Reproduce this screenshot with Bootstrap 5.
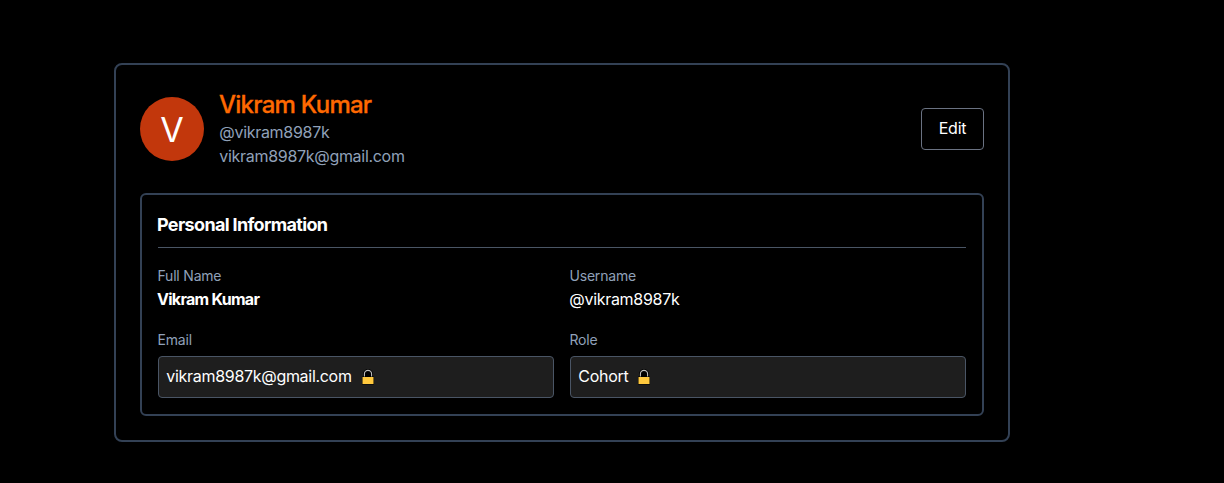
<!DOCTYPE html>
<html lang="en">
<head>
<meta charset="utf-8">
<meta name="viewport" content="width=device-width, initial-scale=1">
<title>Profile</title>
<link href="https://cdn.jsdelivr.net/npm/bootstrap@5.3.0/dist/css/bootstrap.min.css" rel="stylesheet">
<style>
body{background:#000;color:#fff;font-family:Inter,"Liberation Sans",sans-serif;font-size:16px;line-height:24px;padding:63px 0 0 114px;overflow:hidden}
.profile{width:896px;border:2px solid #334155;border-radius:8px}
.panel{border:2px solid #334155;border-radius:6px}
.avatar{width:64px;height:64px;background:#c2370c;font-size:34px;line-height:65px}
.display-name{font-size:24px;line-height:32px;font-weight:500;color:#ff6900;letter-spacing:-.75px;text-indent:-1px;-webkit-text-stroke:.3px #ff6900}
.muted{color:#90a1b9}
.tight{letter-spacing:-.3px;text-indent:-.7px;line-height:22px;padding-bottom:2px}
.edit{border:1px solid #6a7282;border-radius:4px;width:63px;height:42px;letter-spacing:-.2px;padding:0 0 2px}
.section-title{font-size:18px;line-height:28px;font-weight:700;letter-spacing:-.66px;text-indent:-1px;border-bottom:1px solid #4a5565}
.field-label{font-size:14px;color:#90a1b9;letter-spacing:-.2px;text-indent:-.5px}
.full-name{font-weight:700;letter-spacing:-.72px;text-indent:-1px;line-height:22px;padding-bottom:2px}
.locked{background:#1e1e1e;border:1px solid #4a5565;border-radius:4px;padding:8px}
.lock-icon{margin-left:9px}
</style>
</head>
<body>
<svg width="0" height="0" class="position-absolute"><symbol id="lock" viewBox="0 0 14 16"><path d="M3.4 8V5a3.6 3.6 0 0 1 7.2 0v3" fill="none" stroke="#000" stroke-width="2.7"/><path d="M3.4 8V5a3.6 3.6 0 0 1 7.2 0v3" fill="#000" stroke="#bdbdbd" stroke-width="1.1"/><path d="M1 7.5h12v8H1z" fill="#000"/><path d="M1.5 8h11v7h-11z" fill="#ffc83d"/></symbol></svg>
<main class="profile p-4">
  <header class="d-flex align-items-center justify-content-between mb-4">
    <div class="d-flex align-items-center gap-3">
      <div class="avatar rounded-circle text-center">V</div>
      <div>
        <h1 class="display-name mb-0">Vikram Kumar</h1>
        <div class="muted tight">@vikram8987k</div>
        <div class="muted tight">vikram8987k@gmail.com</div>
      </div>
    </div>
    <button class="btn edit text-white" type="button">Edit</button>
  </header>
  <section class="panel p-3">
    <h2 class="section-title pb-2 mb-3">Personal Information</h2>
    <div class="row g-3">
      <div class="col-6"><div class="field-label">Full Name</div><div class="full-name">Vikram Kumar</div></div>
      <div class="col-6"><div class="field-label">Username</div><div class="tight">@vikram8987k</div></div>
      <div class="col-6"><div class="field-label mb-1">Email</div><div class="locked d-flex align-items-center"><span class="tight">vikram8987k@gmail.com</span><svg class="lock-icon" width="14" height="16"><use href="#lock"/></svg></div></div>
      <div class="col-6"><div class="field-label mb-1">Role</div><div class="locked d-flex align-items-center"><span class="tight">Cohort</span><svg class="lock-icon" width="14" height="16"><use href="#lock"/></svg></div></div>
    </div>
  </section>
</main>
<script src="https://cdn.jsdelivr.net/npm/bootstrap@5.3.0/dist/js/bootstrap.bundle.min.js"></script>
</body>
</html>
